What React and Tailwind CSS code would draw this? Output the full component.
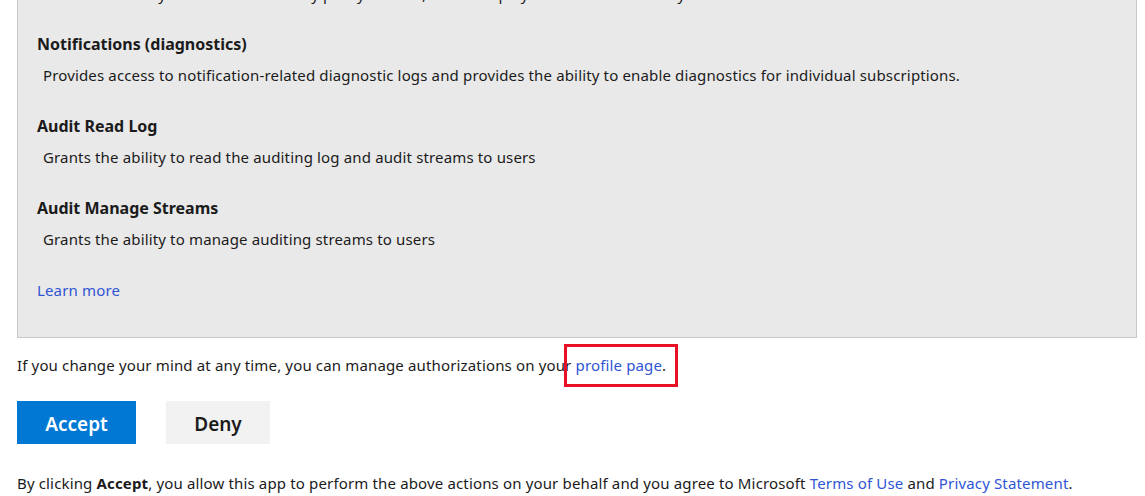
import React from 'react';

// Seznam oprávnění v šedém panelu
const permissions = [
  {
    title: 'Notifications (diagnostics)',
    text: 'Provides access to notification-related diagnostic logs and provides the ability to enable diagnostics for individual subscriptions.',
  },
  {
    title: 'Audit Read Log',
    text: 'Grants the ability to read the auditing log and audit streams to users',
  },
  {
    title: 'Audit Manage Streams',
    text: 'Grants the ability to manage auditing streams to users',
  },
];

const App = () => {
  return (
    <div className="h-[496px] w-[1145px] overflow-hidden bg-white text-[15px] tracking-[0.15px] text-[#1b1b1b] font-['Noto_Sans','Open_Sans',sans-serif]">
      <div className="mt-[-16px] ml-[17px] mr-[8px] border border-[#c8c8c8] border-t-0 bg-[#e9e9e9] pl-[19px] pb-[36px]">
        <p className="ml-[6px] leading-[20px]">
          Grants the ability to create and modify policy entities, and to deploy them to the directory
        </p>
        <div className="mt-[29px] flex flex-col gap-[29px]">
          {permissions.map((p) => (
            <div key={p.title}>
              <h3 className="text-[16px] font-bold leading-[22px] tracking-normal">{p.title}</h3>
              <p className="mt-[9px] ml-[6px] leading-[22px]">{p.text}</p>
            </div>
          ))}
        </div>
        <a href="#" className="mt-[29px] block leading-[22px] text-[#2f55d4]">
          Learn more
        </a>
      </div>

      <p className="mt-[16px] ml-[17px] leading-[22px]">
        If you change your mind at any time, you can manage authorizations on your{' '}
        <span className="relative text-[#2f55d4]">
          profile page
          <span className="absolute left-[-12px] right-[-16px] top-[-11px] bottom-[-12px] border-[3px] border-[#e81123]" />
        </span>
        .
      </p>

      <div className="mt-[25px] ml-[17px] flex gap-[30px]">
        <button className="h-[43px] w-[119px] bg-[#0078d4] pt-[4px] text-[19px] font-semibold text-white tracking-normal">
          Accept
        </button>
        <button className="h-[43px] w-[104px] bg-[#f2f2f2] pt-[4px] text-[19px] font-semibold text-[#1b1b1b] tracking-normal">
          Deny
        </button>
      </div>

      <p className="mt-[28px] ml-[17px] leading-[22px]">
        By clicking <b>Accept</b>, you allow this app to perform the above actions on your behalf and you agree to Microsoft{' '}
        <a href="#" className="text-[#2f55d4]">Terms of Use</a> and{' '}
        <a href="#" className="text-[#2f55d4]">Privacy Statement</a>.
      </p>
    </div>
  );
};

export default App;
